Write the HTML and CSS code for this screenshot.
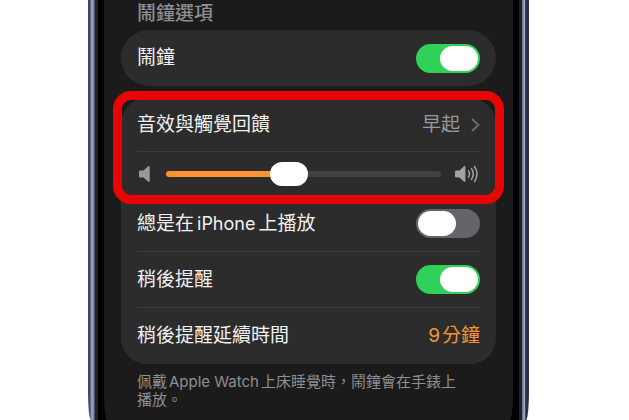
FILE: index.html
```
<!DOCTYPE html>
<html lang="zh-Hant">
<head>
  <meta charset="UTF-8">
  <meta name="viewport" content="width=device-width, initial-scale=1.0">
  <title>鬧鐘選項</title>
  <link rel="stylesheet" href="styles.css">
</head>
<body>
  <div class="phone">
    <div class="bezel">
      <main class="screen">
        <h2>鬧鐘選項</h2>

        <div class="card card-single">
          <div class="row">
            <label for="alarm">鬧鐘</label>
            <input type="checkbox" class="switch" id="alarm" checked>
          </div>
        </div>

        <div class="card">
          <div class="highlight">
            <a href="#" class="row row-link">
              <span>音效與觸覺回饋</span>
              <span class="value">早起
                <svg class="chevron" width="9" height="16" viewBox="0 0 9 16"><path d="M1 2l6.500 6L1 14" fill="none" stroke="#6c6c70" stroke-width="2"/></svg>
              </span>
            </a>
            <div class="row row-volume">
              <svg class="speaker" width="14" height="18" viewBox="0 0 14 18"><path d="M3.200 5.500h3.300l4.500-4c.9-.7 1.700-.5 1.700.5v14c0 1-.8 1.200-1.700.5l-4.500-4H3.200c-.8 0-1.200-.4-1.200-1.200V6.700c0-.8.4-1.200 1.200-1.200z" fill="#98989d"/></svg>
              <input type="range" id="volume" aria-label="音量" min="0" max="100" value="44">
              <svg class="speaker-loud" width="26" height="18" viewBox="0 0 26 18">
                <path d="M2.200 5.500h3.300l4.200-4c.9-.7 1.700-.5 1.700.5v14c0 1-.8 1.200-1.700.5l-4.200-4H2.200c-.8 0-1.200-.4-1.200-1.200V6.700c0-.8.4-1.200 1.200-1.200z" fill="#a1a1a6"/>
                <path d="M14.500 5.800q2 3.200 0 6.400M17.500 3.600q3.600 5.400 0 10.800M20.500 1.500q5 7.500 0 15" fill="none" stroke="#a1a1a6" stroke-width="1.500" stroke-linecap="round"/>
              </svg>
            </div>
          </div>
          <div class="row">
            <label for="always-play">總是在<span class="latin">iPhone</span>上播放</label>
            <input type="checkbox" class="switch" id="always-play">
          </div>
          <div class="row">
            <label for="snooze">稍後提醒</label>
            <input type="checkbox" class="switch" id="snooze" checked>
          </div>
          <div class="row">
            <span>稍後提醒延續時間</span>
            <button type="button" class="duration"><span class="number">9</span>分鐘</button>
          </div>
        </div>

        <p class="note">佩戴<span class="product">Apple Watch</span>上床睡覺時，鬧鐘會在手錶上播放。</p>
      </main>
    </div>
  </div>
</body>
</html>
```
FILE: styles.css
```
* {
  box-sizing: border-box;
}

html {
  height: 100%;
}

body {
  height: 100%;
  margin: 0;
  padding: 0 100px 0 88px;
  background-color: #fff;
  color: #f2f2f2;
  font-family: Inter, "Noto Sans CJK TC", sans-serif;
  font-size: 19px;
  line-height: 26px;
}

/* only the start of the bottom corners is in view */
.phone {
  min-height: 100%;
  padding: 0 7px;
  border-radius: 0 0 3px 3px / 0 0 30px 30px;
  background: linear-gradient(to right, #3f4763 2px, #8d92b4 3px, #9a9fc0 5px, #353b55 7px, transparent 7px) left / 50% 100% no-repeat,
    linear-gradient(to left, #2b3049 3px, #3e4661 4px, #a0a8c8 5px, #747b98 7px, transparent 7px) right / 50% 100% no-repeat,
    #222;
  display: flex;
}

.bezel {
  flex: 1;
  padding: 0 6px;
  border: solid #222;
  border-width: 0 3px;
  background-color: #000;
  display: flex;
}

.screen {
  flex: 1;
  padding: 0 17px 8px;
  border-radius: 0 0 3px 3px / 0 0 30px 30px;
  background-color: #1b1b1b;
}

h2 {
  margin: 0;
  padding: 1px 16px 3px;
  color: #8e8e93;
  font-size: 19px;
  font-weight: 500;
}

.card {
  border-radius: 26px;
  background-color: #2c2c2c;
}

.card-single {
  margin-bottom: 12px;
  border-radius: 28px;
}

.row {
  display: flex;
  align-items: center;
  justify-content: space-between;
  min-height: 56px;
  margin: 0 16px;
  border-bottom: 1px solid #3d3d3f;
  color: inherit;
  text-decoration: none;
}

.row:last-child {
  border-bottom: none;
}

.row-link {
  min-height: 54px;
}

.highlight .row-volume {
  min-height: 44px;
  border-bottom: 1px solid #3d3d3f;
}

.highlight {
  position: relative;
}

.highlight::after {
  content: "";
  position: absolute;
  inset: -7px -8px -8px;
  z-index: 1;
  border: 9px solid #e80505;
  border-radius: 18px;
  pointer-events: none;
}

.value {
  display: flex;
  align-items: center;
  gap: 11px;
  color: #98989d;
}

.latin {
  margin: 0 3px;
  font-size: 18px;
}

.product {
  margin: 0 2px;
}

.number {
  margin-right: 2px;
}

.duration {
  padding: 0;
  border: none;
  background: none;
  color: #f29436;
  font: inherit;
  cursor: pointer;
}

.switch {
  appearance: none;
  width: 64px;
  height: 29px;
  margin: 0;
  padding: 2px;
  border-radius: 15px;
  background-color: #656569;
  cursor: pointer;
}

.switch::before {
  content: "";
  display: block;
  width: 38px;
  height: 25px;
  border-radius: 13px;
  background-color: #fff;
}

.switch:checked {
  background-color: #30d158;
}

.switch:checked::before {
  margin-left: auto;
}

input[type="range"] {
  appearance: none;
  flex: 1;
  min-width: 0;
  height: 24px;
  margin: 0 13px 0 15px;
  background: none;
}

input[type="range"]::-webkit-slider-runnable-track {
  height: 6px;
  border-radius: 3px;
  background: linear-gradient(to right, #ff9230 44%, #414143 44%);
}

input[type="range"]::-webkit-slider-thumb {
  appearance: none;
  width: 38px;
  height: 24px;
  margin-top: -9px;
  border-radius: 12px;
  background-color: #fff;
}

.note {
  margin: 0;
  padding: 9px 30px 0 16px;
  color: #8e8e93;
  font-size: 15px;
  line-height: 18px;
}
```
